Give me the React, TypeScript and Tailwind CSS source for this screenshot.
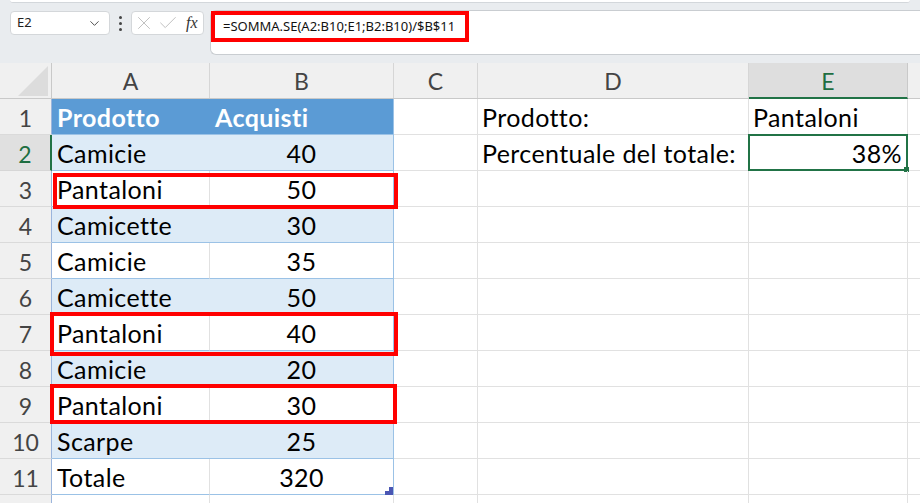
import { ChevronDown, X, Check } from "lucide-react";

type Row = {
  n: number;
  a: string;
  b: string;
  d?: string;
  e?: string;
  head?: boolean;
  band?: boolean;
  selected?: boolean;
};

const rows: Row[] = [
  { n: 1, a: "Prodotto", b: "Acquisti", d: "Prodotto:", e: "Pantaloni", head: true },
  { n: 2, a: "Camicie", b: "40", d: "Percentuale del totale:", e: "38%", band: true, selected: true },
  { n: 3, a: "Pantaloni", b: "50" },
  { n: 4, a: "Camicette", b: "30", band: true },
  { n: 5, a: "Camicie", b: "35" },
  { n: 6, a: "Camicette", b: "50", band: true },
  { n: 7, a: "Pantaloni", b: "40" },
  { n: 8, a: "Camicie", b: "20", band: true },
  { n: 9, a: "Pantaloni", b: "30" },
  { n: 10, a: "Scarpe", b: "25", band: true },
  { n: 11, a: "Totale", b: "320" },
  { n: 12, a: "", b: "" },
];

const cellFont = { fontFamily: "Lato, 'Noto Sans', sans-serif", fontVariantLigatures: "none" as const };

const FormulaBar = () => (
  <div className="relative h-[63px] bg-[#e9ecef]" style={{ fontFamily: "'Noto Sans', 'Open Sans', sans-serif" }}>
    <div className="h-[3px] bg-white border-b border-[#d3d7db] rounded-b-md mx-[10px]" />
    <div className="absolute left-[10px] top-[11px] w-[100px] h-[24px] bg-white border border-[#d4d7da] rounded-[4px] flex items-center justify-between pl-[6px] pr-[7px]">
      <span className="text-[13px] text-[#222]">E2</span>
      <ChevronDown className="w-[15px] h-[15px] text-[#444]" strokeWidth={1.5} />
    </div>
    <div className="absolute left-[119px] top-[16px] flex flex-col gap-[3px]">
      <span className="w-[3px] h-[3px] rounded-full bg-[#444]" />
      <span className="w-[3px] h-[3px] rounded-full bg-[#444]" />
      <span className="w-[3px] h-[3px] rounded-full bg-[#444]" />
    </div>
    <div className="absolute left-[131px] top-[11px] w-[73px] h-[24px] bg-white border border-[#d4d7da] rounded-[4px] flex items-center pl-[1px] gap-[2px]">
      <X className="w-[22px] h-[22px] text-[#b4b4b4] shrink-0" strokeWidth={0.9} />
      <Check className="w-[22px] h-[22px] text-[#b4b4b4] shrink-0" strokeWidth={0.9} />
      <span className="italic text-[16px] text-[#333] ml-[5px]" style={{ fontFamily: "'Liberation Serif', serif" }}>fx</span>
    </div>
    <div className="absolute left-[210px] right-0 top-[10px] h-[45px] bg-white border-t border-l border-b border-[#c9cdd1] rounded-tl-[6px] rounded-bl-[6px]">
      <div className="absolute left-[0px] top-[0px] w-[258px] h-[31px] border-[4px] border-[#ff0000] flex items-center pl-[8px]">
        <span className="text-[13px] text-[#111]">=SOMMA.SE(A2:B10;E1;B2:B10)/$B$11</span>
      </div>
    </div>
  </div>
);

const ColHeader = () => (
  <div className="flex h-[36px] bg-[#f0f0f0] border-b border-[#c9c9c9] text-[23px] text-[#444]" style={cellFont}>
    <div className="relative w-[52px] shrink-0 border-r border-[#c9c9c9]">
      <svg className="absolute left-[18px] top-[3px]" width="30" height="30" viewBox="0 0 30 30">
        <polygon points="30,0 30,30 0,30" fill="#dcdcdc" />
      </svg>
    </div>
    <div className="w-[158px] shrink-0 border-r border-[#d6d6d6] flex items-center justify-center pt-[2px]">A</div>
    <div className="w-[184px] shrink-0 border-r border-[#d6d6d6] flex items-center justify-center pt-[2px]">B</div>
    <div className="w-[84px] shrink-0 border-r border-[#d6d6d6] flex items-center justify-center pt-[2px]">C</div>
    <div className="w-[271px] shrink-0 border-r border-[#d6d6d6] flex items-center justify-center pt-[2px]">D</div>
    <div className="w-[159px] shrink-0 border-r border-[#c9c9c9] bg-[#dedede] border-b-2 border-b-[#217346] -mb-px flex items-center justify-center pt-[2px] text-[#1e6e41]">E</div>
    <div className="flex-1" />
  </div>
);

const DataRow = ({ r }: { r: Row }) => {
  const tableBg = r.head ? "bg-[#5b9bd5] text-white font-bold" : r.band ? "bg-[#ddebf7]" : "bg-white";
  const tableB = r.n <= 11 ? "border-b border-[#9bc2e6]" : "border-b border-[#e1e1e1]";
  return (
    <div className="flex h-[36px] text-[25px] leading-none tracking-[0.4px] text-black" style={cellFont}>
      <div
        className={
          r.selected
            ? "w-[52px] shrink-0 bg-[#e0e0e0] border-r-2 border-[#217346] border-b border-b-[#d6d6d6] flex items-end justify-center pb-[4px] text-[23px] tracking-normal text-[#1e6e41]"
            : "w-[52px] shrink-0 bg-[#f0f0f0] border-r border-[#9bb5dc] border-b border-b-[#dadada] flex items-end justify-center pb-[4px] text-[23px] tracking-normal text-[#444]"
        }
      >
        {r.n <= 11 ? r.n : ""}
      </div>
      <div className={`w-[158px] shrink-0 ${tableBg} ${tableB} ${r.band || r.head ? "" : "border-r border-r-[#e1e1e1]"} flex items-end pl-[5px] pb-[4px]`}>
        {r.a}
      </div>
      <div
        className={`w-[184px] shrink-0 ${tableBg} ${tableB} border-r ${r.n <= 11 ? "border-r-[#9bc2e6]" : "border-r-[#e1e1e1]"} flex items-end pb-[4px] ${r.head ? "pl-[5px]" : "justify-center"}`}
      >
        {r.b}
      </div>
      <div className="w-[84px] shrink-0 border-r border-b border-[#e1e1e1]" />
      <div className="w-[271px] shrink-0 border-r border-b border-[#e1e1e1] flex items-end pl-[4px] pb-[4px]">{r.d}</div>
      <div
        className={`relative w-[159px] shrink-0 border-r border-b border-[#e1e1e1] flex items-end pb-[4px] ${
          r.selected ? "justify-end pr-[5px]" : "pl-[4px]"
        }`}
      >
        {r.e}
        {r.selected && (
          <div className="absolute -left-[1px] -top-[1px] -right-[1px] -bottom-[1px] border-2 border-[#217346]">
            <div className="absolute -right-[3px] -bottom-[3px] w-[5px] h-[5px] bg-[#217346]" />
          </div>
        )}
      </div>
      <div className="flex-1 border-b border-[#e1e1e1]" />
    </div>
  );
};

export default function App() {
  return (
    <div className="w-[920px] h-[503px] overflow-hidden bg-white">
      <FormulaBar />
      <div className="relative">
        <ColHeader />
        {rows.map((r) => (
          <DataRow key={r.n} r={r} />
        ))}
        {/* red marks */}
        <div className="absolute left-[53px] top-[110px] w-[345px] h-[36px] border-[4px] border-[#ff0000]" />
        <div className="absolute left-[50px] top-[249px] w-[348px] h-[44px] border-[4px] border-[#ff0000]" />
        <div className="absolute left-[50px] top-[321px] w-[347px] h-[40px] border-[4px] border-[#ff0000]" />
        {/* table resize handle */}
        <svg className="absolute left-[385px] top-[424px]" width="8" height="8" viewBox="0 0 8 8">
          <polygon points="8,0 4,0 4,4 0,4 0,8 8,8" fill="#4a56b3" />
        </svg>
      </div>
    </div>
  );
}
